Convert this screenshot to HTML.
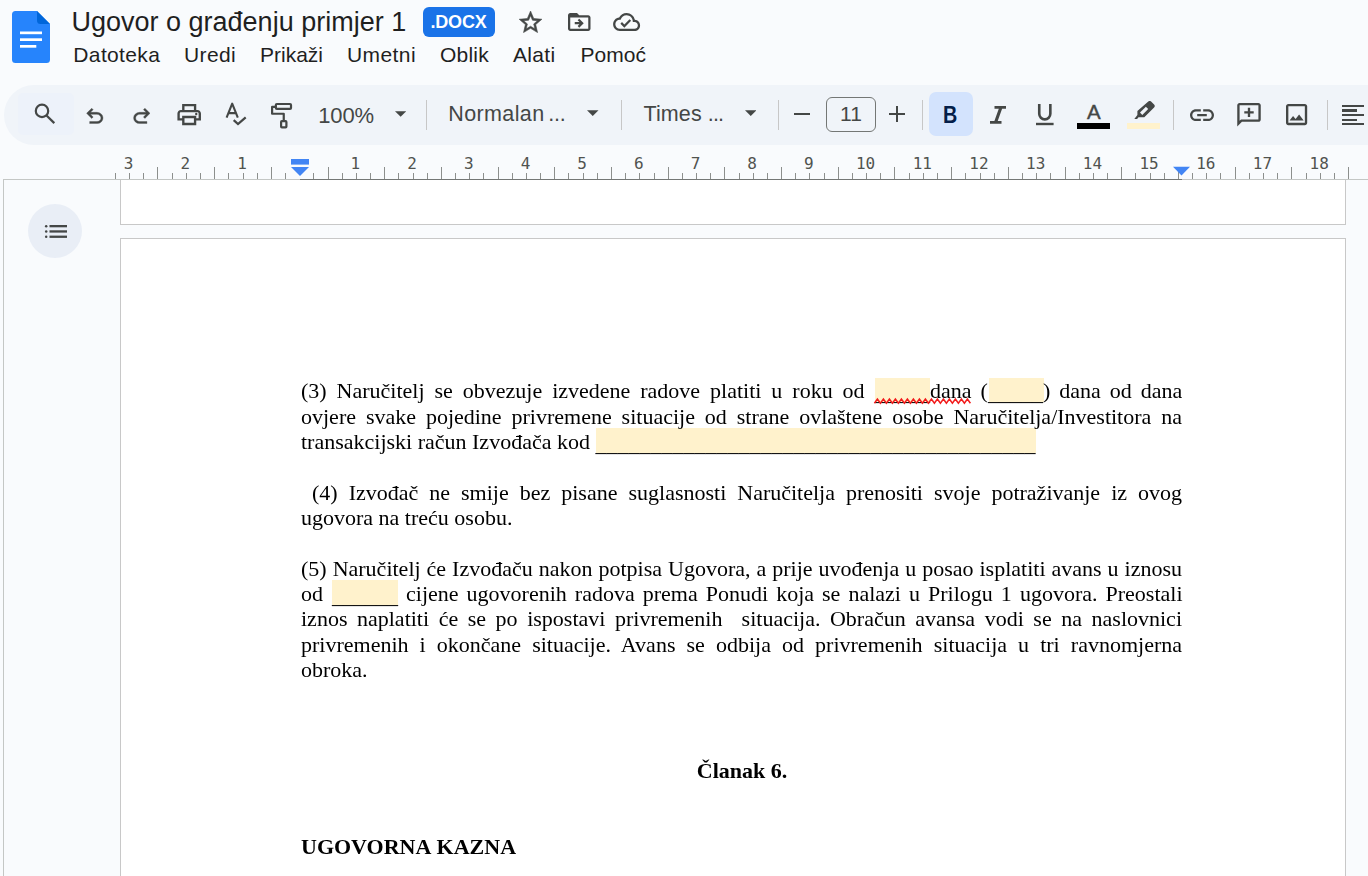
<!DOCTYPE html>
<html lang="hr"><head><meta charset="utf-8"><title>Ugovor o građenju primjer 1</title>
<style>
html,body{margin:0;padding:0}
body{width:1368px;height:876px;overflow:hidden;position:relative;background:#f9fbfd;font-family:"Liberation Sans",sans-serif;color:#1f1f1f}
.abs,.abs>*{position:absolute}
div,svg,span.p{position:absolute}
.t{white-space:pre;line-height:1}
.menu{font-size:21px;top:44px;color:#1f1f1f}
.tb{font-size:21px;color:#444746}
.sep{width:1px;top:100px;height:30px;background:#c7c7c7}
.ln{will-change:transform;left:301px;width:881px;font-family:"Liberation Serif",serif;font-size:22px;line-height:26px;height:26px;color:#000;white-space:pre-wrap;text-align:justify;text-align-last:justify}
.ln.l{text-align:left;text-align-last:left}
.ln.c{text-align:center;text-align-last:center}
.hl{background:#fff2cc}
.u{position:relative;top:2px}
.rn{font-family:"DejaVu Sans Mono","Liberation Mono",monospace;font-size:16px;color:#50534f;top:155.500px;width:40px;text-align:center;line-height:1}
</style></head><body>

<svg style="left:12px;top:11px" width="38" height="52" viewBox="0 0 38 52">
<path d="M3.5 0H25L38 13V48.5A3.5 3.5 0 0 1 34.5 52H3.5A3.5 3.5 0 0 1 0 48.500V3.5A3.5 3.5 0 0 1 3.500 0Z" fill="#2684fc"/>
<path d="M25 0L38 13H28.500A3.5 3.5 0 0 1 25 9.500Z" fill="#0066da"/>
<rect x="8" y="20.500" width="22" height="2.700" fill="#fff"/><rect x="8" y="27.300" width="22" height="2.700" fill="#fff"/><rect x="8" y="34" width="16.300" height="2.700" fill="#fff"/>
</svg>
<div class="t" style="left:71.500px;top:8.700px;font-size:27px;color:#1f1f1f">Ugovor o građenju primjer 1</div>
<div style="left:423px;top:7px;width:72px;height:30px;border-radius:6px;background:#1a73e8"></div>
<div class="t" style="left:430.500px;top:13px;font-size:18px;font-weight:bold;color:#fff;letter-spacing:-0.2px">.DOCX</div>
<div class="t menu" style="left:73.3px;letter-spacing:0.367px">Datoteka</div>
<div class="t menu" style="left:184px;letter-spacing:0.362px">Uredi</div>
<div class="t menu" style="left:260px;letter-spacing:0px">Prikaži</div>
<div class="t menu" style="left:347px;letter-spacing:0.41px">Umetni</div>
<div class="t menu" style="left:440px;letter-spacing:0.23px">Oblik</div>
<div class="t menu" style="left:513px;letter-spacing:0.33px">Alati</div>
<div class="t menu" style="left:580.5px;letter-spacing:0.03px">Pomoć</div>
<svg style="left:519.400px;top:11.200px" width="23.100" height="21.600" viewBox="2 2 20 19"><path fill="#444746" stroke="#444746" stroke-width=".5" d="M22 9.240l-7.190-.62L12 2 9.190 8.630 2 9.240l5.460 4.730L5.820 21 12 17.270 18.180 21l-1.630-7.030L22 9.240zM12 15.400l-3.760 2.270 1-4.280-3.320-2.880 4.380-.38L12 6.100l1.710 4.040 4.380.38-3.320 2.880 1 4.280L12 15.400z"/></svg>
<svg style="left:566.700px;top:12.900px" width="24.500" height="18" viewBox="2 4 20 16"><path fill="#444746" d="M20 6h-8l-2-2H4c-1.100 0-1.990.9-1.990 2L2 18c0 1.100.9 2 2 2h16c1.100 0 2-.9 2-2V8c0-1.100-.9-2-2-2zm0 12H4V8h16v10zm-8.010-9l-1.410 1.410L12.160 12H8v2h4.160l-1.590 1.590L11.990 17 16 13.010 11.990 9z"/></svg>
<svg style="left:613.400px;top:12.900px" width="27.200" height="18" viewBox="0 4 24 16"><path fill="#444746" d="M19.350 10.040C18.670 6.590 15.640 4 12 4 9.110 4 6.600 5.640 5.350 8.040 2.340 8.360 0 10.910 0 14c0 3.310 2.690 6 6 6h13c2.760 0 5-2.240 5-5 0-2.640-2.050-4.780-4.650-4.960zM19 18H6c-2.210 0-4-1.790-4-4s1.790-4 4-4h.71C7.370 7.690 9.480 6 12 6c3.040 0 5.500 2.460 5.500 5.500v.5H19c1.660 0 3 1.340 3 3s-1.340 3-3 3zm-9-3.820l-2.090-2.090L6.500 13.500 10 17l6.010-6.010-1.410-1.410z"/></svg>
<div style="left:4px;top:85px;width:1400px;height:60px;border-radius:30px;background:#f0f4f9"></div>
<div style="left:18px;top:92.500px;width:55.500px;height:42.500px;border-radius:5px;background:#edf2fa"></div>
<svg style="left:33px;top:102px" width="24" height="24" viewBox="0 0 24 24" fill="none" stroke="#444746" stroke-width="2.200"><circle cx="9" cy="8.900" r="6.200"/><path d="M13.300 13.200L21.300 21.100"/></svg>
<svg style="left:86.200px;top:108px" width="17.600" height="15.800" viewBox="3.8 3.8 16.4 15.4"><path fill="#444746" stroke="#444746" stroke-width=".35" d="M7 19v-2h7.100q1.575 0 2.738-1T18 13.500 16.838 11 14.100 10H7.800l2.600 2.600L9 14 4 9l5-5 1.400 1.400L7.800 8h6.300q2.425 0 4.163 1.575T20 13.500t-1.737 3.925T14.100 19z"/></svg>
<svg style="left:133px;top:108px" width="17.600" height="15.800" viewBox="3.8 3.8 16.4 15.4"><path fill="#444746" stroke="#444746" stroke-width=".35" d="M9.900 19q-2.425 0-4.163-1.575T4 13.500t1.737-3.925T9.900 8h6.300l-2.600-2.600L15 4l5 5-5 5-1.400-1.400 2.600-2.600H9.900q-1.575 0-2.738 1T6 13.500 7.163 16 9.900 17H17v2z"/></svg>
<svg style="left:176.900px;top:104.400px" width="24.400" height="21.200" viewBox="2 3 20 18"><path fill="#444746" d="M19 8h-1V3H6v5H5c-1.660 0-3 1.340-3 3v6h4v4h12v-4h4v-6c0-1.660-1.340-3-3-3zM8 5h8v3H8V5zm8 12v2H8v-4h8v2zm2-2v-2H6v2H4v-4c0-.55.450-1 1-1h14c.55 0 1 .450 1 1v4h-2z"/><circle cx="18" cy="11.500" r="1" fill="#444746"/></svg>
<svg style="left:224px;top:101px" width="24" height="26" viewBox="0 0 24 26" fill="none" stroke="#444746" stroke-width="2.100"><path d="M2.600 16.700L8.200 2.700L13.800 16.700M4.700 12.100H11.700" stroke-linejoin="round"/><path d="M9.700 19.100L14 23L21.700 16.300" stroke-width="2.200"/></svg>
<svg style="left:270px;top:101px" width="24" height="29" viewBox="0 0 24 29" fill="none" stroke="#444746" stroke-width="2.200" stroke-linejoin="round"><rect x="5.850" y="3" width="15.150" height="4.900" rx="1"/><path d="M5.850 5.900H2.100V12.750H13.750V19.500"/><rect x="11.100" y="20.100" width="5.300" height="6.300" rx=".8"/></svg>
<div class="t tb" style="left:318.200px;top:104.600px;font-size:22px;letter-spacing:-.1px">100%</div>
<svg style="left:395px;top:111.3px" width="11.3" height="6" viewBox="0 0 10 5"><path d="M0 0H10L5 5Z" fill="#444746"/></svg>
<div class="sep" style="left:426.0px"></div>
<div class="sep" style="left:621.0px"></div>
<div class="sep" style="left:778.0px"></div>
<div class="sep" style="left:922.0px"></div>
<div class="sep" style="left:1172.9px"></div>
<div class="sep" style="left:1327.1px"></div>
<div class="t tb" style="left:448.300px;top:104px;font-size:21.500px;letter-spacing:.38px">Normalan <span style="letter-spacing:-.2px;margin-left:-2.600px">...</span></div>
<svg style="left:587px;top:110px" width="11.5" height="6.3" viewBox="0 0 10 5"><path d="M0 0H10L5 5Z" fill="#444746"/></svg>
<div class="t tb" style="left:643.500px;top:104px;font-size:21.500px;letter-spacing:.1px">Times <span style="letter-spacing:-.9px">...</span></div>
<svg style="left:744.7px;top:110px" width="11.5" height="6.3" viewBox="0 0 10 5"><path d="M0 0H10L5 5Z" fill="#444746"/></svg>
<div style="left:794px;top:112.600px;width:15.600px;height:2.300px;background:#444746"></div>
<div style="left:826px;top:97px;width:48px;height:33px;border:1px solid #747775;border-radius:6px"></div>
<div class="t tb" style="left:826px;width:50px;text-align:center;top:102.500px;font-size:21px">11</div>
<div style="left:889px;top:112.600px;width:15.800px;height:2.300px;background:#444746"></div>
<div style="left:895.750px;top:105.900px;width:2.300px;height:15.700px;background:#444746"></div>
<div style="left:929px;top:92px;width:44px;height:44px;border-radius:7px;background:#d3e3fd"></div>
<div class="t" style="left:942.700px;top:103.900px;font-size:23px;font-weight:bold;color:#041e49;transform:scaleX(.86);transform-origin:0 0">B</div>
<svg style="left:990px;top:106.200px" width="16" height="17.800" viewBox="0 0 16 17.800"><path fill="#444746" d="M4.500 0H16V2.800H12.100L7.700 15H11.500V17.800H0V15H4.400L8.800 2.800H4.500Z"/></svg>
<svg style="left:1036.200px;top:104.400px" width="17.600" height="21.300" viewBox="0 0 17.600 21.300"><path fill="none" stroke="#444746" stroke-width="2.600" d="M3.250 0V9.800A5.550 5.550 0 0 0 14.350 9.800V0"/><rect x="0" y="18.800" width="17.600" height="2.400" fill="#444746"/></svg>
<div class="t" style="left:1087.100px;top:102.400px;font-size:20.500px;color:#444746;-webkit-text-stroke:.4px #444746">A</div>
<div style="left:1077px;top:123px;width:33px;height:6px;background:#000"></div>
<svg style="left:1133.700px;top:100.600px" width="21.300" height="18.400" viewBox="0 0 21.300 18.400"><path fill="#444746" d="M14.300 .6a2 2 0 0 1 2.800 0l3 3a2 2 0 0 1 0 2.800l-9.800 9.800-5.800 0-1.700 2.200H0l3.400-4.300V9.900Z"/><path fill="#f0f4f9" d="M6.300 10.200l5.900-5.900 2.300 2.300-5.900 5.900Z" transform="translate(-.3 1.400)"/></svg>
<div style="left:1127px;top:123px;width:33px;height:6px;background:#fff2cc"></div>
<svg style="left:1190px;top:108.750px" width="24" height="12.250" viewBox="2 7 20 10"><path fill="#444746" d="M3.900 12c0-1.710 1.390-3.100 3.100-3.100h4V7H7c-2.760 0-5 2.240-5 5s2.240 5 5 5h4v-1.900H7c-1.710 0-3.100-1.390-3.100-3.100zM8 13h8v-2H8v2zm9-6h-4v1.900h4c1.710 0 3.100 1.390 3.100 3.100s-1.390 3.100-3.100 3.100h-4V17h4c2.760 0 5-2.240 5-5s-2.240-5-5-5z"/></svg>
<svg style="left:1237px;top:103.100px" width="24" height="23.500" viewBox="2 2 20 20"><path fill="#444746" d="M20 2H4c-1.100 0-2 .9-2 2v18l4-4h14c1.100 0 2-.9 2-2V4c0-1.100-.9-2-2-2zm0 14H5.200L4 17.200V4h16v12zm-9-2h2v-3h3V9h-3V6h-2v3H8v2h3v3z"/></svg>
<svg style="left:1286.400px;top:104.400px" width="21.200" height="21.200" viewBox="3 3 18 18"><path fill="#444746" d="M19 5v14H5V5h14m0-2H5c-1.100 0-2 .9-2 2v14c0 1.100.9 2 2 2h14c1.100 0 2-.9 2-2V5c0-1.100-.9-2-2-2zm-4.860 8.860l-3 3.870L9 13.140 6 17h12l-3.860-5.140z"/></svg>
<div style="left:1342.300px;top:104.75px;width:21.7px;height:2.300px;background:#444746"></div>
<div style="left:1342.300px;top:109.35px;width:14.7px;height:2.300px;background:#444746"></div>
<div style="left:1342.300px;top:113.95px;width:21.7px;height:2.300px;background:#444746"></div>
<div style="left:1342.300px;top:118.55px;width:14.7px;height:2.300px;background:#444746"></div>
<div style="left:1342.300px;top:123.15px;width:21.7px;height:2.300px;background:#444746"></div>
<svg style="left:0;top:150px" width="1368" height="32" viewBox="0 150 1368 32" shape-rendering="crispEdges"><rect x="3" y="179" width="1365" height="1" fill="#c4c7c5"/><rect x="300" y="179" width="882" height="1" fill="#747775"/><rect x="114.5" y="173" width="1" height="6" fill="#8c8f8d"/><rect x="128.5" y="173" width="1" height="6" fill="#8c8f8d"/><rect x="142.5" y="173" width="1" height="6" fill="#8c8f8d"/><rect x="156.5" y="167" width="1" height="12" fill="#8c8f8d"/><rect x="171.5" y="173" width="1" height="6" fill="#8c8f8d"/><rect x="185.5" y="173" width="1" height="6" fill="#8c8f8d"/><rect x="199.5" y="173" width="1" height="6" fill="#8c8f8d"/><rect x="213.5" y="167" width="1" height="12" fill="#8c8f8d"/><rect x="227.5" y="173" width="1" height="6" fill="#8c8f8d"/><rect x="242.5" y="173" width="1" height="6" fill="#8c8f8d"/><rect x="256.5" y="173" width="1" height="6" fill="#8c8f8d"/><rect x="270.5" y="167" width="1" height="12" fill="#8c8f8d"/><rect x="284.5" y="173" width="1" height="6" fill="#8c8f8d"/><rect x="312.5" y="173" width="1" height="6" fill="#8c8f8d"/><rect x="327.5" y="167" width="1" height="12" fill="#8c8f8d"/><rect x="341.5" y="173" width="1" height="6" fill="#8c8f8d"/><rect x="355.5" y="173" width="1" height="6" fill="#8c8f8d"/><rect x="369.5" y="173" width="1" height="6" fill="#8c8f8d"/><rect x="383.5" y="167" width="1" height="12" fill="#8c8f8d"/><rect x="397.5" y="173" width="1" height="6" fill="#8c8f8d"/><rect x="412.5" y="173" width="1" height="6" fill="#8c8f8d"/><rect x="426.5" y="173" width="1" height="6" fill="#8c8f8d"/><rect x="440.5" y="167" width="1" height="12" fill="#8c8f8d"/><rect x="454.5" y="173" width="1" height="6" fill="#8c8f8d"/><rect x="468.5" y="173" width="1" height="6" fill="#8c8f8d"/><rect x="482.5" y="173" width="1" height="6" fill="#8c8f8d"/><rect x="497.5" y="167" width="1" height="12" fill="#8c8f8d"/><rect x="511.5" y="173" width="1" height="6" fill="#8c8f8d"/><rect x="525.5" y="173" width="1" height="6" fill="#8c8f8d"/><rect x="539.5" y="173" width="1" height="6" fill="#8c8f8d"/><rect x="553.5" y="167" width="1" height="12" fill="#8c8f8d"/><rect x="567.5" y="173" width="1" height="6" fill="#8c8f8d"/><rect x="582.5" y="173" width="1" height="6" fill="#8c8f8d"/><rect x="596.5" y="173" width="1" height="6" fill="#8c8f8d"/><rect x="610.5" y="167" width="1" height="12" fill="#8c8f8d"/><rect x="624.5" y="173" width="1" height="6" fill="#8c8f8d"/><rect x="638.5" y="173" width="1" height="6" fill="#8c8f8d"/><rect x="653.5" y="173" width="1" height="6" fill="#8c8f8d"/><rect x="667.5" y="167" width="1" height="12" fill="#8c8f8d"/><rect x="681.5" y="173" width="1" height="6" fill="#8c8f8d"/><rect x="695.5" y="173" width="1" height="6" fill="#8c8f8d"/><rect x="709.5" y="173" width="1" height="6" fill="#8c8f8d"/><rect x="723.5" y="167" width="1" height="12" fill="#8c8f8d"/><rect x="738.5" y="173" width="1" height="6" fill="#8c8f8d"/><rect x="752.5" y="173" width="1" height="6" fill="#8c8f8d"/><rect x="766.5" y="173" width="1" height="6" fill="#8c8f8d"/><rect x="780.5" y="167" width="1" height="12" fill="#8c8f8d"/><rect x="794.5" y="173" width="1" height="6" fill="#8c8f8d"/><rect x="808.5" y="173" width="1" height="6" fill="#8c8f8d"/><rect x="823.5" y="173" width="1" height="6" fill="#8c8f8d"/><rect x="837.5" y="167" width="1" height="12" fill="#8c8f8d"/><rect x="851.5" y="173" width="1" height="6" fill="#8c8f8d"/><rect x="865.5" y="173" width="1" height="6" fill="#8c8f8d"/><rect x="879.5" y="173" width="1" height="6" fill="#8c8f8d"/><rect x="893.5" y="167" width="1" height="12" fill="#8c8f8d"/><rect x="908.5" y="173" width="1" height="6" fill="#8c8f8d"/><rect x="922.5" y="173" width="1" height="6" fill="#8c8f8d"/><rect x="936.5" y="173" width="1" height="6" fill="#8c8f8d"/><rect x="950.5" y="167" width="1" height="12" fill="#8c8f8d"/><rect x="964.5" y="173" width="1" height="6" fill="#8c8f8d"/><rect x="979.5" y="173" width="1" height="6" fill="#8c8f8d"/><rect x="993.5" y="173" width="1" height="6" fill="#8c8f8d"/><rect x="1007.5" y="167" width="1" height="12" fill="#8c8f8d"/><rect x="1021.5" y="173" width="1" height="6" fill="#8c8f8d"/><rect x="1035.5" y="173" width="1" height="6" fill="#8c8f8d"/><rect x="1049.5" y="173" width="1" height="6" fill="#8c8f8d"/><rect x="1064.5" y="167" width="1" height="12" fill="#8c8f8d"/><rect x="1078.5" y="173" width="1" height="6" fill="#8c8f8d"/><rect x="1092.5" y="173" width="1" height="6" fill="#8c8f8d"/><rect x="1106.5" y="173" width="1" height="6" fill="#8c8f8d"/><rect x="1120.5" y="167" width="1" height="12" fill="#8c8f8d"/><rect x="1134.5" y="173" width="1" height="6" fill="#8c8f8d"/><rect x="1149.5" y="173" width="1" height="6" fill="#8c8f8d"/><rect x="1163.5" y="173" width="1" height="6" fill="#8c8f8d"/><rect x="1177.5" y="167" width="1" height="12" fill="#8c8f8d"/><rect x="1191.5" y="173" width="1" height="6" fill="#8c8f8d"/><rect x="1205.5" y="173" width="1" height="6" fill="#8c8f8d"/><rect x="1219.5" y="173" width="1" height="6" fill="#8c8f8d"/><rect x="1234.5" y="167" width="1" height="12" fill="#8c8f8d"/><rect x="1248.5" y="173" width="1" height="6" fill="#8c8f8d"/><rect x="1262.5" y="173" width="1" height="6" fill="#8c8f8d"/><rect x="1276.5" y="173" width="1" height="6" fill="#8c8f8d"/><rect x="1290.5" y="167" width="1" height="12" fill="#8c8f8d"/><rect x="1305.5" y="173" width="1" height="6" fill="#8c8f8d"/><rect x="1319.5" y="173" width="1" height="6" fill="#8c8f8d"/><rect x="1333.5" y="173" width="1" height="6" fill="#8c8f8d"/><rect x="1347.5" y="167" width="1" height="12" fill="#8c8f8d"/></svg>
<div class="t rn" style="left:108.6px">3</div>
<div class="t rn" style="left:165.3px">2</div>
<div class="t rn" style="left:222.0px">1</div>
<div class="t rn" style="left:335.4px">1</div>
<div class="t rn" style="left:392.1px">2</div>
<div class="t rn" style="left:448.8px">3</div>
<div class="t rn" style="left:505.5px">4</div>
<div class="t rn" style="left:562.2px">5</div>
<div class="t rn" style="left:618.9px">6</div>
<div class="t rn" style="left:675.6px">7</div>
<div class="t rn" style="left:732.2px">8</div>
<div class="t rn" style="left:788.9px">9</div>
<div class="t rn" style="left:845.6px">10</div>
<div class="t rn" style="left:902.3px">11</div>
<div class="t rn" style="left:959.0px">12</div>
<div class="t rn" style="left:1015.7px">13</div>
<div class="t rn" style="left:1072.4px">14</div>
<div class="t rn" style="left:1129.1px">15</div>
<div class="t rn" style="left:1185.8px">16</div>
<div class="t rn" style="left:1242.5px">17</div>
<div class="t rn" style="left:1299.2px">18</div>
<svg style="left:290px;top:158px" width="21" height="19" viewBox="290 158 21 19"><rect x="291" y="159" width="18" height="5.600" fill="#4285f4"/><path d="M291 167H309L300 176Z" fill="#4285f4"/></svg>
<svg style="left:1172px;top:165px" width="20" height="12" viewBox="1172 165 20 12"><path d="M1173 166.800H1190L1181.500 175.600Z" fill="#4285f4"/></svg>
<div style="left:3px;top:180px;width:1px;height:700px;background:#c4c7c5"></div>
<div style="left:120px;top:180px;width:1224px;height:44px;background:#fff;border:1px solid #c8c8c8;border-top:none"></div>
<div style="left:120px;top:238px;width:1224px;height:700px;background:#fff;border:1px solid #c8c8c8"></div>
<div style="left:28px;top:204px;width:54px;height:54px;border-radius:27px;background:#e9eef6"></div>
<svg style="left:43.500px;top:224px" width="24" height="15" viewBox="0 0 24 15" fill="#444746"><rect x="5.500" y="1" width="17.500" height="2.300"/><rect x="5.500" y="6.300" width="17.500" height="2.300"/><rect x="5.500" y="11.600" width="17.500" height="2.300"/><circle cx="2.200" cy="2.150" r="1.250"/><circle cx="2.200" cy="7.450" r="1.250"/><circle cx="2.200" cy="12.750" r="1.250"/></svg>
<div class="hl" style="left:874.6px;top:377.6px;width:55.4px;height:24.500px"></div>
<div class="hl" style="left:988.5px;top:377.6px;width:55.0px;height:24.500px"></div>
<div class="hl" style="left:595.5px;top:428.2px;width:440.0px;height:24.500px"></div>
<div class="hl" style="left:331.5px;top:580.2px;width:66.0px;height:24.500px"></div>
<div class="ln " style="top:378.30px;left:301px;width:563.6px">(3) Naručitelj se obvezuje izvedene radove platiti u roku od</div>
<div class="ln " style="top:378.30px;left:874.6px;width:307.4px"><span class=u>_____</span>dana (<span class=u>_____</span>) dana od dana</div>
<div class="ln " style="top:403.62px;left:301px;width:881px">ovjere svake pojedine privremene situacije od strane ovlaštene osobe Naručitelja/Investitora na</div>
<div class="ln l" style="top:428.94px;left:301px;width:881px">transakcijski račun Izvođača kod <span class=u>________________________________________</span></div>
<div class="ln " style="top:479.58px;left:301px;width:881px"> (4) Izvođač ne smije bez pisane suglasnosti Naručitelja prenositi svoje potraživanje iz ovog</div>
<div class="ln l" style="top:504.90px;left:301px;width:881px">ugovora na treću osobu.</div>
<div class="ln " style="top:555.54px;left:301px;width:881px">(5) Naručitelj će Izvođaču nakon potpisa Ugovora, a prije uvođenja u posao isplatiti avans u iznosu</div>
<div class="ln l" style="top:580.86px;left:301px;width:30px">od</div>
<div class="ln " style="top:580.86px;left:331.5px;width:850.5px"><span class=u>______</span> cijene ugovorenih radova prema Ponudi koja se nalazi u Prilogu 1 ugovora. Preostali</div>
<div class="ln " style="top:606.18px;left:301px;width:881px">iznos naplatiti će se po ispostavi privremenih  situacija. Obračun avansa vodi se na naslovnici</div>
<div class="ln " style="top:631.50px;left:301px;width:881px">privremenih i okončane situacije. Avans se odbija od privremenih situacija u tri ravnomjerna</div>
<div class="ln l" style="top:656.82px;left:301px;width:881px">obroka.</div>
<div class="ln c" style="top:758.10px;left:301px;width:882px"><b>Članak 6.</b></div>
<div class="ln l" style="top:834.06px;left:301px;width:881px"><b style="word-spacing:1px">UGOVORNA KAZNA</b></div>
<svg style="left:870px;top:396px" width="110" height="10" viewBox="870 396 110 10"><polyline fill="none" stroke="#f21b1b" stroke-width="1.500" points="874.4,403.3 877.4,399.0 880.4,403.3 883.4,399.0 886.4,403.3 889.4,399.0 892.4,403.3 895.4,399.0 898.4,403.3 901.4,399.0 904.4,403.3 907.4,399.0 910.4,403.3 913.4,399.0 916.4,403.3 919.4,399.0 922.4,403.3 925.4,399.0 928.4,403.3 931.4,399.0 934.4,403.3 937.4,399.0 940.4,403.3 943.4,399.0 946.4,403.3 949.4,399.0 952.4,403.3 955.4,399.0 958.4,403.3 961.4,399.0 964.4,403.3 967.4,399.0 970.4,403.3"/></svg>
</body></html>
